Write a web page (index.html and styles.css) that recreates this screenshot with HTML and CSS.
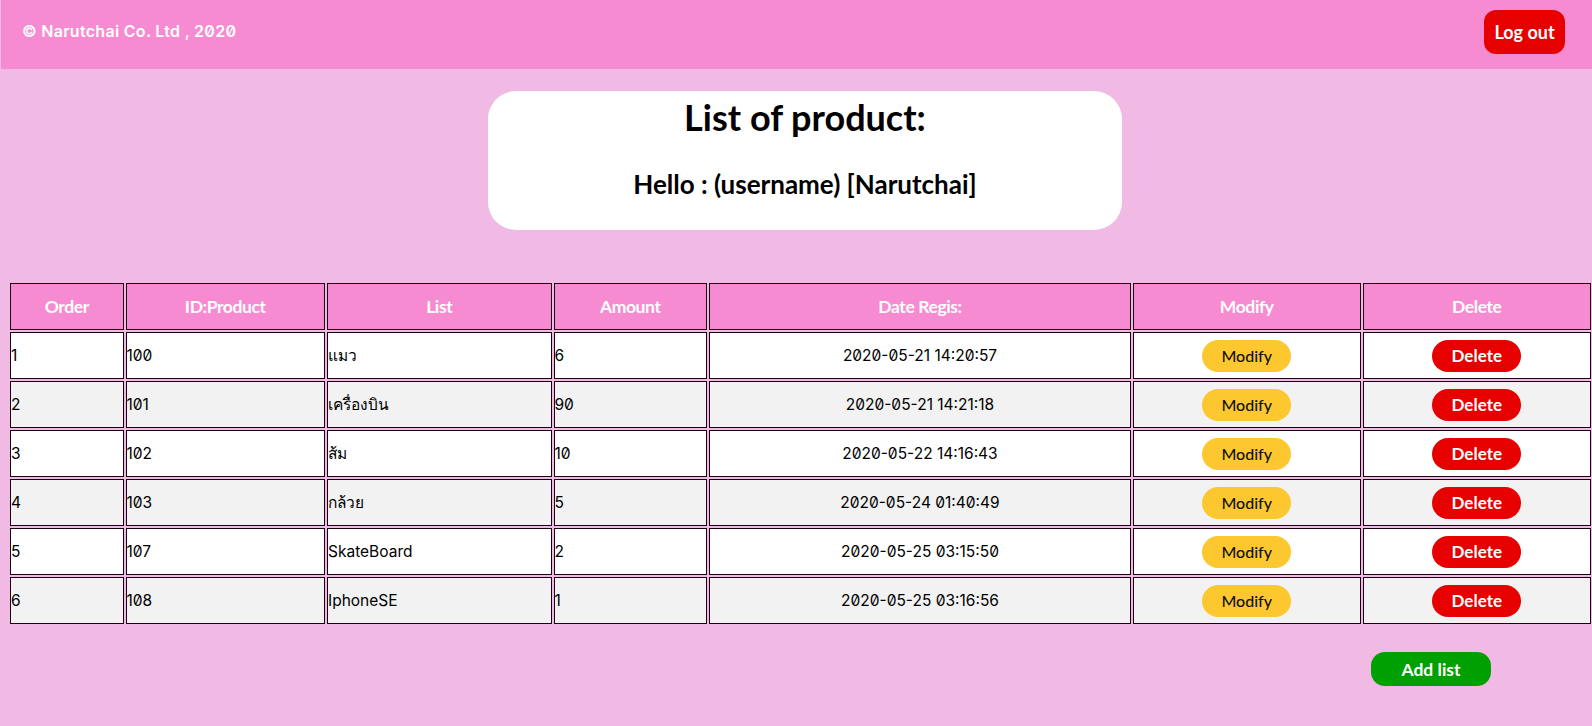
FILE: index.html
```html
<!DOCTYPE html>
<html lang="th">
<head>
<meta charset="utf-8">
<title>List of product</title>
<link rel="stylesheet" href="styles.css">
</head>
<body>
<header class="topbar">
  <span class="copy">© Narutchai Co. Ltd , 2020</span>
  <button class="btn btn-logout">Log out</button>
</header>

<section class="titlebox">
  <h1 class="title">List of product:</h1>
  <h2 class="hello">Hello : (username) [Narutchai]</h2>
</section>

<table class="products">
  <colgroup>
    <col class="c-order"><col class="c-id"><col class="c-list"><col class="c-amount"><col class="c-date"><col class="c-mod"><col class="c-del">
  </colgroup>
  <thead>
    <tr><th>Order</th><th>ID:Product</th><th>List</th><th>Amount</th><th>Date Regis:</th><th>Modify</th><th>Delete</th></tr>
  </thead>
  <tbody>
    <tr><td>1</td><td>100</td><td>แมว</td><td>6</td><td class="center">2020-05-21 14:20:57</td><td class="center"><button class="btn btn-mod">Modify</button></td><td class="center"><button class="btn btn-del">Delete</button></td></tr>
    <tr><td>2</td><td>101</td><td>เครื่องบิน</td><td>90</td><td class="center">2020-05-21 14:21:18</td><td class="center"><button class="btn btn-mod">Modify</button></td><td class="center"><button class="btn btn-del">Delete</button></td></tr>
    <tr><td>3</td><td>102</td><td>ส้ม</td><td>10</td><td class="center">2020-05-22 14:16:43</td><td class="center"><button class="btn btn-mod">Modify</button></td><td class="center"><button class="btn btn-del">Delete</button></td></tr>
    <tr><td>4</td><td>103</td><td>กล้วย</td><td>5</td><td class="center">2020-05-24 01:40:49</td><td class="center"><button class="btn btn-mod">Modify</button></td><td class="center"><button class="btn btn-del">Delete</button></td></tr>
    <tr><td>5</td><td>107</td><td>SkateBoard</td><td>2</td><td class="center">2020-05-25 03:15:50</td><td class="center"><button class="btn btn-mod">Modify</button></td><td class="center"><button class="btn btn-del">Delete</button></td></tr>
    <tr><td>6</td><td>108</td><td>IphoneSE</td><td>1</td><td class="center">2020-05-25 03:16:56</td><td class="center"><button class="btn btn-mod">Modify</button></td><td class="center"><button class="btn btn-del">Delete</button></td></tr>
  </tbody>
</table>

<div class="actions">
  <button class="btn btn-add">Add list</button>
</div>
</body>
</html>
```

FILE: styles.css
```css
html, body {
  margin: 0;
  padding: 0;
}
body {
  background: #f0bae4;
  font-family: Lato, "Noto Sans", "DejaVu Sans", sans-serif;
  color: #000;
  min-height: 726px;
}
.topbar {
  margin-left: 1px;
  height: 69px;
  background: #f78bd1;
  display: flex;
  align-items: center;
  justify-content: space-between;
  padding: 0 27px 0 21px;
  box-sizing: border-box;
}
.copy {
  color: #fff;
  font-family: Inter, "Noto Sans", sans-serif;
  font-feature-settings: "zero" 1;
  font-weight: 600;
  font-size: 16px;
  margin-top: -8px;
  letter-spacing: 0.3px;
}
.btn {
  border: none;
  font-family: Lato, "Noto Sans", sans-serif;
  cursor: pointer;
  padding: 0;
}
.btn-logout {
  width: 81px;
  height: 44px;
  border-radius: 12px;
  background: #e60000;
  color: #fff;
  font-weight: 700;
  font-size: 18px;
  margin-top: -6px;
}
.titlebox {
  width: 634px;
  height: 139px;
  margin: 22px 0 0 488px;
  background: #fff;
  border-radius: 28px;
  text-align: center;
  box-sizing: border-box;
  padding-top: 4px;
}
.title {
  margin: 0;
  font-size: 36px;
  font-weight: 700;
  line-height: 44px;
}
.hello {
  margin: 29px 0 0;
  font-size: 26px;
  font-weight: 700;
  line-height: 32px;
}
.products {
  margin: 51px 0 0 8px;
  width: calc(100% - 8px);
  border-collapse: separate;
  border-spacing: 2px;
  table-layout: fixed;
}
.c-order { width: 113.5px; }
.c-id { width: 199.5px; }
.c-list { width: 224.5px; }
.c-amount { width: 153.5px; }
.c-date { width: 422px; }
.c-mod { width: 227.5px; }
.c-del { width: 228.5px; }
.products th,
.products td {
  border: 1px solid #1a0010;
  padding: 0;
  box-sizing: border-box;
  vertical-align: middle;
}
.products th {
  background: #f78bd1;
  color: #fff;
  font-weight: 700;
  font-size: 17.5px;
  text-align: center;
  height: 47px;
  letter-spacing: -0.4px;
}
.products td {
  height: 47px;
  font-family: Inter, "Noto Sans", "DejaVu Sans", sans-serif;
  font-feature-settings: "zero" 1;
  font-size: 15.5px;
  text-align: left;
  background: #fff;
}
.products tbody tr:nth-child(even) td {
  background: #f2f2f2;
}
.products td.center {
  text-align: center;
}
.btn-mod,
.btn-del {
  width: 89px;
  height: 32px;
  border-radius: 16px;
  vertical-align: middle;
}
.btn-mod {
  background: #fdc82f;
  color: #111;
  font-weight: 500;
  font-size: 16px;
}
.btn-del {
  background: #e60000;
  color: #fff;
  font-weight: 700;
  font-size: 17px;
}
.actions {
  display: flex;
  justify-content: flex-end;
  padding-right: 101px;
  margin-top: 26px;
}
.btn-add {
  width: 120px;
  height: 34px;
  border-radius: 14px;
  background: #00a000;
  color: #fff;
  font-weight: 700;
  font-size: 17.5px;
}
```
